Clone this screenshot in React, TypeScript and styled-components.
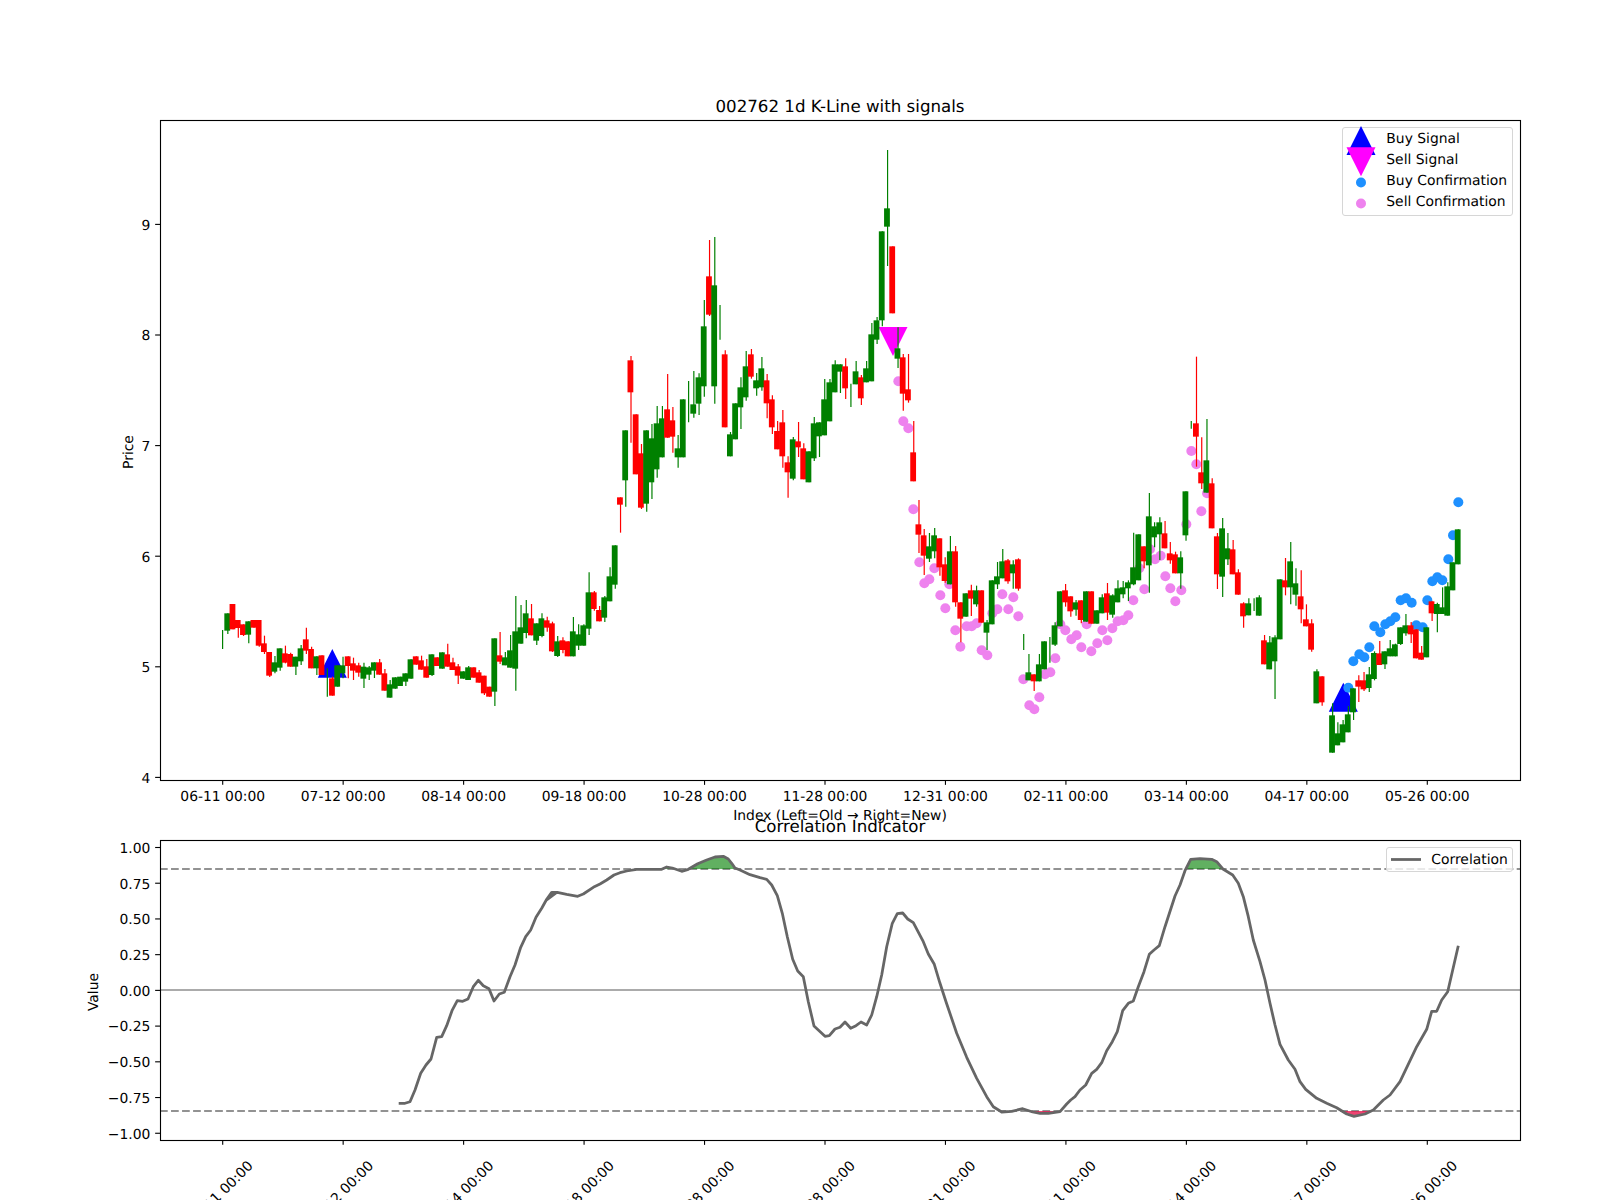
import React from "react";
import styled, { createGlobalStyle } from "styled-components";

type Row = [string, number, number, number?, number?];
type Group = { base: number; rows: Row[] };
type Pt = [number, number];

const G = "g";
const R = "r";
const N = -1;

const candleGroups: Group[] = [
  {
    base: 480,
    rows: [
      [G, N, N, 450, 507], [G, 400, 452, 400, 462], [R, 372, 448], [R, 420, 444, 420, 473], [R, 433, 465, 433, 468],
      [G, 424, 464, 424, 490], [R, 420, 443], [R, 420, 497, 420, 500], [R, 490, 516, 467, 522], [R, 516, 587, 516, 591],
      [G, 547, 575, 528, 580], [G, 505, 563, 505, 572], [R, 520, 548, 497, 550], [R, 522, 560, 518, 560], [G, 530, 560, 530, 585],
      [G, 505, 544, 495, 555], [R, 478, 512, 443, 522], [R, 507, 565, 500, 565], [G, 529, 565, 529, 585], [R, 526, 585],
      [G, N, N, 565, 650], [R, 595, 647, 590, 647], [G, 556, 620], [G, 556, 580, 530, 595], [R, 529, 558, 529, 595],
      [R, 550, 572, 533, 600], [R, 556, 578, 548, 590], [G, 560, 596, 548, 624], [G, 562, 584, 558, 600], [G, 547, 572, 547, 594],
      [R, 547, 584, 537, 584], [R, 580, 632, 567, 632], [G, 613, 653, 600, 653], [G, 592, 626], [G, 590, 618],
      [G, 580, 605, 580, 618], [G, 538, 596], [R, 529, 554], [R, 541, 569, 527, 569], [R, 559, 593, 537, 593],
      [G, 523, 585, 523, 588], [R, 532, 558], [G, 517, 566], [R, 523, 560, 491, 560], [R, 547, 570, 533, 570],
      [R, 559, 587, 552, 612], [G, 574, 596], [G, 562, 600, 558, 600], [R, 562, 593], [R, 577, 608, 570, 608],
      [R, 587, 640, 587, 645], [R, 620, 650], [G, 475, 635, 475, 678], [R, 526, 545, 456, 552], [G, 532, 556, 516, 556],
      [G, 511, 563, 465, 563], [G, 454, 566, 348, 632], [G, 442, 491, 375, 491], [G, 400, 459, 360, 475], [R, 415, 466, 372, 466],
      [G, 430, 482, 430, 495], [G, 415, 468, 400, 472], [R, 421, 443, 410, 455], [R, 430, 514, 425, 516], [G, 484, 528, 468, 531],
      [R, 481, 510, 472, 520], [R, 484, 529], [G, 454, 529, 411, 529], [G, 463, 497, 433, 510], [G, 436, 497, 433, 497],
      [G, 337, 446, 277, 465], [R, 337, 387, 333, 392], [R, 390, 424, 378, 424], [G, 352, 413, 348, 426], [G, 289, 364, 262, 364],
      [G, 196, 314, 196, 326],
    ],
  },
  {
    base: 220,
    rows: [
      [R, 832, 854, 832, 938], [G, 631, 781, 631, 860], [R, 421, 517, 408, 668], [R, 583, 763], [R, 700, 863, 672, 867],
      [G, 631, 851, 631, 875], [G, 655, 787, 612, 837], [G, 610, 748, 558, 773], [G, 595, 712, 558, 712], [R, 568, 653, 462, 653],
      [R, 601, 650, 561, 698], [G, 685, 712, 645, 743], [G, 538, 712], [G, N, N, 483, 607], [G, 553, 581, 453, 593],
      [G, 472, 551, 460, 585], [G, 319, 499, 240, 530], [R, 169, 284, 60, 288], [G, 196, 499, 51, 551], [G, N, N, 255, 359],
      [R, 403, 622, 391, 622], [G, 643, 709, 636, 709], [G, 550, 658], [G, 502, 562, 472, 627], [G, 439, 532, 393, 542],
      [R, 403, 470, 387, 476], [G, 481, 505, 459, 527], [G, 445, 502, 411, 512], [R, 481, 550, 462, 595], [R, 538, 622, 526, 642],
      [R, 633, 688, 603, 688], [R, 607, 709, 570, 743], [R, 727, 757, 709, 833], [G, 658, 776, 651, 781], [R, 664, 682, 606, 711],
      [R, 685, 778, 670, 778], [G, 694, 787], [G, 610, 715, 591, 723], [G, 607, 649, 607, 711], [G, 538, 646, 477, 646],
      [G, 487, 604, 477, 604], [G, 433, 517, 421, 517], [G, 433, 455, 433, 519], [R, 439, 505, 415, 537], [G, N, N, 491, 561],
      [G, 454, 493, 423, 493], [R, 472, 535, 465, 555], [G, 445, 487, 423, 487], [G, 343, 484, 309, 484], [G, 301, 359, 291, 372],
      [G, 34, 301, 34, 319],
    ],
  },
  {
    base: 140,
    rows: [
      [G, 205, 260, 30, 378], [R, 319, 520], [G, 625, 656, 562, 684], [R, 652, 761, 642, 812], [R, 748, 781, 642, 788],
    ],
  },
  {
    base: 440,
    rows: [
      [R, 37, 124, -57, 124], [R, 253, 284, 180, 339], [R, 286, 347, 267, 405], [G, 319, 356, 279, 366], [G, 286, 334, 264, 355],
      [R, 295, 382, 295, 407], [R, 373, 423, 352, 428], [G, 334, 433, 288, 433], [R, 334, 487, 318, 500], [R, 487, 536, 487, 607],
      [G, 460, 530], [R, 451, 476, 434, 528], [G, 451, 493, 437, 500], [R, 451, 548], [G, 547, 578, 540, 630],
      [G, 421, 553], [G, 409, 433, 366, 447], [G, 364, 415, 327, 415], [R, 361, 424, 357, 431], [G, 373, 400, 361, 446],
      [R, 358, 446, 355, 452], [G, N, N, 582, 630], [G, 697, 721, 642, 721], [R, 703, 724, 703, 753], [G, 673, 724, 642, 724],
      [G, 604, 688], [G, N, N, 591, 668], [G, 556, 614, 547, 618], [G, 454, 559], [R, 451, 487, 432, 500],
      [R, 469, 514, 469, 530], [G, 487, 509, 480, 527], [R, 481, 540, 481, 550], [G, 454, 545], [R, 454, 551],
      [G, 511, 551], [G, 472, 520, 463, 520], [R, 460, 518, 429, 540], [G, 466, 524, 463, 533], [G, 445, 487, 421, 487],
      [G, 442, 463, 423, 475], [G, 427, 445, 421, 483], [G, 382, 433, 278, 436], [G, 283, 421], [R, 319, 364, 319, 385],
      [G, 229, 376, 159, 458], [G, 259, 292, 247, 322], [G, 247, 283, 232, 360], [R, 280, 325, 243, 325], [R, 340, 361, 306, 371],
      [R, 343, 400, 335, 400], [G, 352, 400, 334, 446], [G, 154, 286, 154, 302],
    ],
  },
  {
    base: 340,
    rows: [
      [G, N, N, 243, 266], [R, 250, 290, 50, 380], [R, 397, 430, 292, 447], [G, 361, 458, 237, 458], [R, 430, 565, 415, 565],
      [R, 589, 703, 579, 747], [G, 565, 710, 534, 771], [G, 625, 658, 579, 675], [R, 628, 703, 600, 703], [R, 697, 764, 688, 764],
      [R, 790, 829, 787, 863], [G, 790, 826, 775, 826], [G, N, N, 775, 813], [G, 772, 827, 766, 827], [R, 901, 973, 885, 973],
      [G, 907, 988, 888, 988], [G, 892, 964, 886, 1077], [G, 718, 898], [R, 721, 742, 654, 766], [G, 664, 742, 606, 793],
      [G, 730, 764, 685, 797], [R, 769, 808, 691, 850], [R, 838, 859, 793, 859], [R, 850, 929, 838, 935], [G, 994, 1090, 988, 1090],
      [R, 1009, 1087, 1009, 1097], [G, N, N, N, N], [G, 1126, 1238, 1090, 1238], [G, 1180, 1216, 1147, 1216], [G, 1153, 1207, 1140, 1207],
      [G, 1123, 1177, 1098, 1177], [G, 1045, 1117, 1045, 1140], [R, 1021, 1040, 1006, 1086], [R, 1021, 1048, 996, 1053], [G, 1003, 1044, 981, 1056],
      [G, 939, 1017, 934, 1021], [R, 940, 975, 903, 975], [G, 934, 973, 934, 987], [G, 925, 949, 900, 949], [G, 913, 949, 911, 949],
      [G, 862, 912, 862, 915], [G, 856, 880, 822, 887], [R, 856, 883, 846, 909], [R, 868, 955], [R, 938, 959, 918, 959],
      [G, 862, 952], [R, 784, 820, 784, 843], [G, 792, 822, 788, 877], [G, 802, 822, 742, 822], [G, 739, 827, 727, 827],
      [G, 667, 751], [G, 568, 673],
    ],
  },
];

const xOf = (i: number) => 222.5 + 5.236 * i;

const candles = candleGroups
  .flatMap((group) =>
    group.rows.map((row) => ({
      up: row[0] === G,
      bodyTop: row[1] === N ? null : group.base + row[1] / 3,
      bodyBottom: row[2] === N ? null : group.base + row[2] / 3,
      wickTop: row[3] === N ? null : group.base + (row[3] ?? row[1]) / 3,
      wickBottom: row[4] === N ? null : group.base + (row[4] ?? row[2]) / 3,
    }))
  )
  .map((c, i) => ({ ...c, x: xOf(i) }));

const map = (bx: number, by: number, pts: number[][]): Pt[] =>
  pts.map(([x, y]) => [bx + x / 3, by + y / 3]);

const pinkDots: Pt[] = [
  ...map(540, 220, [[1075, 484], [1090, 604], [1105, 625], [1120, 868]]),
  ...map(880, 440, [
    [118, 367], [163, 385], [133, 430], [148, 418], [208, 433], [181, 466], [196, 505], [226, 571], [241, 620], [260, 559],
    [275, 559], [290, 550], [305, 631], [322, 646], [337, 520], [352, 508], [367, 463], [385, 508], [400, 472], [415, 529],
    [430, 718], [448, 796], [463, 808], [478, 772], [495, 703], [511, 697], [526, 655], [541, 553], [556, 571], [574, 598],
    [590, 586], [604, 622], [620, 553], [634, 634], [652, 610], [667, 571], [682, 601], [697, 565], [713, 544], [730, 541],
    [745, 526], [760, 481], [778, 385], [793, 448], [810, 328], [825, 358], [842, 347], [856, 409], [871, 445], [886, 484],
    [904, 451], [919, 253], [934, 33], [949, 73], [964, 214], [981, 160],
  ]),
];

const blueDots: Pt[] = map(1140, 340, [
  [625, 1043], [640, 964], [658, 943], [673, 952], [688, 922], [703, 859], [721, 877], [736, 853], [751, 844], [766, 832],
  [782, 781], [798, 775], [815, 788], [829, 856], [848, 862], [862, 781], [877, 724], [892, 712], [907, 721], [925, 658],
  [939, 586], [955, 487],
]);

const correlation: Pt[] = [
  ...map(60, 760, [
    [1016, 1030], [1035, 1030], [1050, 1025], [1065, 990], [1082, 940], [1098, 915], [1113, 897], [1130, 832], [1145, 830], [1160, 797],
    [1176, 752], [1192, 722], [1208, 724], [1224, 717], [1240, 680], [1255, 661], [1270, 677], [1287, 686], [1302, 723], [1318, 702],
    [1333, 697], [1350, 650], [1365, 615], [1382, 562], [1397, 530], [1412, 510], [1428, 472], [1445, 445], [1460, 418], [1475, 397],
    [1490, 397],
  ]),
  ...map(540, 780, [
    [20, 360], [36, 337], [52, 337], [80, 343], [113, 349], [130, 342], [160, 322], [180, 312], [200, 300], [222, 285],
    [240, 278], [260, 273], [290, 268], [320, 268], [365, 268], [380, 261], [397, 264], [425, 274], [445, 268], [473, 251],
    [500, 240], [525, 231], [550, 229], [565, 237], [575, 250], [585, 264], [600, 270], [630, 284], [660, 293], [680, 298],
    [695, 315], [712, 347], [727, 400], [742, 470], [758, 538], [773, 573], [790, 590], [805, 665], [822, 738], [855, 769],
    [868, 767], [885, 747], [900, 742], [915, 726], [932, 745], [948, 737], [963, 726], [980, 735], [995, 705], [1010, 650],
    [1025, 585], [1040, 500], [1057, 430], [1072, 401], [1088, 399], [1103, 417], [1120, 428], [1150, 485], [1165, 522], [1183, 553],
    [1200, 610], [1218, 665], [1250, 760], [1280, 832], [1310, 895], [1340, 950], [1360, 980], [1385, 996], [1415, 994], [1448, 986],
    [1478, 996],
  ]),
  ...map(1040, 780, [
    [0, 1000], [25, 1000], [60, 995], [80, 972], [92, 960], [105, 950], [120, 930], [137, 915], [155, 880], [170, 868],
    [185, 848], [200, 812], [217, 785], [232, 755], [248, 692], [265, 670], [280, 663], [295, 620], [312, 575], [328, 523],
    [342, 510], [358, 497], [375, 440], [405, 348], [420, 315], [435, 272], [452, 238], [480, 236], [515, 238], [530, 245],
    [550, 268], [578, 285], [595, 310], [610, 350], [625, 410], [640, 480], [660, 545], [675, 600], [690, 670], [705, 735],
    [720, 793], [745, 840], [765, 868], [780, 905], [797, 928], [830, 955], [860, 970], [890, 983], [920, 1002], [942, 1009],
    [975, 1002], [1000, 990], [1030, 960], [1050, 945], [1080, 905], [1130, 800], [1160, 748], [1175, 694], [1190, 694], [1205, 660],
    [1223, 635], [1255, 497],
  ]),
];

const toPoints = (pts: Pt[]) => pts.map(([x, y]) => `${x.toFixed(1)},${y.toFixed(1)}`).join(" ");

// Pieces of the line that lie beyond a level, closed against that level.
const beyond = (pts: Pt[], level: number, above: boolean): string[] => {
  const inside = (y: number) => (above ? y < level : y > level);
  const shapes: string[] = [];
  let cur: Pt[] = [];
  pts.forEach((p, i) => {
    const prev = pts[i - 1];
    if (prev && inside(prev[1]) !== inside(p[1])) {
      const t = (level - prev[1]) / (p[1] - prev[1]);
      const cross: Pt = [prev[0] + t * (p[0] - prev[0]), level];
      cur.push(cross);
      if (!inside(p[1])) {
        shapes.push(toPoints(cur));
        cur = [];
      }
    }
    if (inside(p[1])) cur.push(p);
  });
  return shapes;
};

const dateTicks = ["06-11", "07-12", "08-14", "09-18", "10-28", "11-28", "12-31", "02-11", "03-14", "04-17", "05-26"].map(
  (d, i) => ({ label: `${d} 00:00`, x: 222.7 + 120.46 * i })
);

const priceTicks = [4, 5, 6, 7, 8, 9].map((p) => ({ label: String(p), y: 777.4 - 110.6 * (p - 4) }));

const valueTicks = ["1.00", "0.75", "0.50", "0.25", "0.00", "\u22120.25", "\u22120.50", "\u22120.75", "\u22121.00"].map(
  (label, i) => ({ label, y: 847.5 + 35.72 * i })
);

const GlobalStyle = createGlobalStyle`
  html, body { margin: 0; padding: 0; background: #fff; }
`;

const Page = styled.main`
  width: 1600px;
  height: 1200px;
  box-sizing: border-box;
  padding: 120px 80px 0 160px;
  background: #fff;
  overflow: hidden;
  display: flex;
  flex-direction: column;
  gap: 60px;
  font-family: "DejaVu Sans", sans-serif;
  text-rendering: geometricPrecision;
`;

const Panel = styled.section<{ $height: number }>`
  position: relative;
  width: 1360px;
  height: ${(p) => p.$height}px;
  flex: none;
`;

const Plot = styled.svg`
  display: block;
  width: 100%;
  height: 100%;
  overflow: visible;
`;

const Frame = styled.rect`
  fill: none;
  stroke: #000;
  stroke-width: 1.11px;
`;

const Tick = styled.line`
  stroke: #000;
  stroke-width: 1.11px;
`;

const TickLabel = styled.text<{ $anchor?: string }>`
  font-family: "DejaVu Sans", sans-serif;
  font-size: 13.89px;
  fill: #000;
  text-anchor: ${(p) => p.$anchor ?? "middle"};
`;

const ChartTitle = styled.text`
  font-family: "DejaVu Sans", sans-serif;
  font-size: 16.67px;
  fill: #000;
  text-anchor: middle;
`;

const Wick = styled.line<{ $up: boolean }>`
  stroke: ${(p) => (p.$up ? "#008000" : "#ff0000")};
  stroke-width: 1.2px;
`;

const Body = styled.rect<{ $up: boolean }>`
  fill: ${(p) => (p.$up ? "#008000" : "#ff0000")};
`;

const Signal = styled.polygon<{ $color: string }>`
  fill: ${(p) => p.$color};
`;

const Dot = styled.circle<{ $color: string }>`
  fill: ${(p) => p.$color};
`;

const LevelLine = styled.line`
  stroke: #929292;
  stroke-width: 2.08px;
  stroke-dasharray: 7.7 3.33;
`;

const ZeroLine = styled.line`
  stroke: #ababab;
  stroke-width: 2.08px;
`;

const CorrelationLine = styled.polyline`
  fill: none;
  stroke: #666;
  stroke-width: 2.78px;
  stroke-linejoin: round;
`;

const Band = styled.polygon<{ $high: boolean }>`
  fill: ${(p) => (p.$high ? "#008000" : "#e8174f")};
  opacity: ${(p) => (p.$high ? 0.62 : 0.8)};
`;

const Legend = styled.div<{ $right: number; $top: number }>`
  position: absolute;
  top: ${(p) => p.$top}px;
  right: ${(p) => p.$right}px;
  box-sizing: border-box;
  border: 1px solid #d6d6d6;
  border-radius: 3px;
  background: rgba(255, 255, 255, 0.8);
  font-size: 13.89px;
  color: #000;
  white-space: nowrap;
`;

const SignalLegend = styled(Legend)`
  width: 171px;
  height: 88.4px;
  padding: 0 0 0 3px;
`;

const LineLegend = styled(Legend)`
  width: 127px;
  height: 25px;
  padding: 0 0 0 4px;
`;

const LegendRow = styled.div<{ $height: number }>`
  display: flex;
  align-items: center;
  height: ${(p) => p.$height}px;
  gap: 10px;
`;

const LegendSlot = styled.svg`
  flex: none;
  width: 30px;
  height: 20px;
  overflow: visible;
`;

const LegendLine = styled.line`
  stroke: #666;
  stroke-width: 2.78px;
`;

const LegendLabel = styled.span`
  line-height: 1;
  margin-top: 2px;
`;

const triangle = (x: number, apex: number, base: number, half: number) =>
  `${x},${apex} ${x - half},${base} ${x + half},${base}`;

const DateTicks: React.FC<{ bottom: number }> = ({ bottom }) => (
  <>
    {dateTicks.map((t) => (
      <Tick key={t.label} x1={t.x} x2={t.x} y1={bottom} y2={bottom + 4.86} />
    ))}
  </>
);

const ValueAxis: React.FC<{ ticks: { label: string; y: number }[] }> = ({ ticks }) => (
  <>
    {ticks.map((t) => (
      <g key={t.label}>
        <Tick x1={155.14} x2={160} y1={t.y} y2={t.y} />
        <TickLabel $anchor="end" x={150.4} y={t.y + 5.3}>
          {t.label}
        </TickLabel>
      </g>
    ))}
  </>
);

export default function App() {
  return (
    <>
      <GlobalStyle />
      <Page>
        <Panel $height={660}>
          <Plot viewBox="160 120 1360 660">
            <ChartTitle x={840} y={111.7}>002762 1d K-Line with signals</ChartTitle>
            <Signal $color="#0000ff" points={triangle(332.3, 649, 677.7, 14.5)} />
            <Signal $color="#0000ff" points={triangle(1343.3, 682.7, 711.7, 14.5)} />
            <Signal $color="#ff00ff" points={triangle(893, 356, 327, 14.5)} />
            {blueDots.map(([x, y]) => (
              <Dot key={`b${x}`} $color="#1e90ff" cx={x} cy={y} r={5} />
            ))}
            {pinkDots.map(([x, y]) => (
              <Dot key={`p${x}`} $color="#ee82ee" cx={x} cy={y} r={5} />
            ))}
            {candles.map((c) => (
              <g key={c.x}>
                {c.wickTop !== null && c.wickBottom !== null && (
                  <Wick $up={c.up} x1={c.x + 0.1} x2={c.x + 0.1} y1={c.wickTop} y2={c.wickBottom} />
                )}
                {c.bodyTop !== null && c.bodyBottom !== null && (
                  <Body $up={c.up} x={c.x - 3.4} y={c.bodyTop} width={5.8} height={c.bodyBottom - c.bodyTop} />
                )}
              </g>
            ))}
            <Frame x={160.5} y={120.5} width={1360} height={660} />
            <ValueAxis ticks={priceTicks} />
            <DateTicks bottom={780} />
            {dateTicks.map((t) => (
              <TickLabel key={t.label} x={t.x} y={801}>
                {t.label}
              </TickLabel>
            ))}
            <TickLabel x={840} y={820}>Index (Left=Old → Right=New)</TickLabel>
            <TickLabel transform="rotate(-90 133 452)" x={133} y={452}>Price</TickLabel>
          </Plot>
          <SignalLegend $top={7.3} $right={6.7}>
            <LegendRow $height={21}>
              <LegendSlot viewBox="0 0 30 20">
                <Signal $color="#0000ff" points={triangle(15, -3.1, 25.9, 14.5)} />
              </LegendSlot>
              <LegendLabel>Buy Signal</LegendLabel>
            </LegendRow>
            <LegendRow $height={21}>
              <LegendSlot viewBox="0 0 30 20">
                <Signal $color="#ff00ff" points={triangle(15, 26.2, -2.8, 14.5)} />
              </LegendSlot>
              <LegendLabel>Sell Signal</LegendLabel>
            </LegendRow>
            <LegendRow $height={21}>
              <LegendSlot viewBox="0 0 30 20">
                <Dot $color="#1e90ff" cx={15} cy={11.5} r={5} />
              </LegendSlot>
              <LegendLabel>Buy Confirmation</LegendLabel>
            </LegendRow>
            <LegendRow $height={21}>
              <LegendSlot viewBox="0 0 30 20">
                <Dot $color="#ee82ee" cx={15} cy={11.5} r={5} />
              </LegendSlot>
              <LegendLabel>Sell Confirmation</LegendLabel>
            </LegendRow>
          </SignalLegend>
        </Panel>
        <Panel $height={300}>
          <Plot viewBox="160 840 1360 300">
            <ChartTitle x={840} y={831.7}>Correlation Indicator</ChartTitle>
            <LevelLine x1={160} x2={1520} y1={869} y2={869} />
            <LevelLine x1={160} x2={1520} y1={1111} y2={1111} />
            <ZeroLine x1={160} x2={1520} y1={990} y2={990} />
            {beyond(correlation, 869, true).map((pts) => (
              <Band key={pts} $high points={pts} />
            ))}
            {beyond(correlation, 1111, false).map((pts) => (
              <Band key={pts} $high={false} points={pts} />
            ))}
            <CorrelationLine points={toPoints(correlation)} />
            <Frame x={160.5} y={840.5} width={1360} height={300} />
            <ValueAxis ticks={valueTicks} />
            <DateTicks bottom={1140} />
            {dateTicks.map((t) => (
              <TickLabel key={t.label} transform={`rotate(-45 ${t.x - 2.5} 1193)`} x={t.x - 2.5} y={1198}>
                {t.label}
              </TickLabel>
            ))}
            <TickLabel transform="rotate(-90 98 992)" x={98} y={992}>Value</TickLabel>
          </Plot>
          <LineLegend $top={7.3} $right={6.7}>
            <LegendRow $height={23}>
              <LegendSlot viewBox="0 0 30 20">
                <LegendLine x1={0} x2={30} y1={9.5} y2={9.5} />
              </LegendSlot>
              <LegendLabel>Correlation</LegendLabel>
            </LegendRow>
          </LineLegend>
        </Panel>
      </Page>
    </>
  );
}
